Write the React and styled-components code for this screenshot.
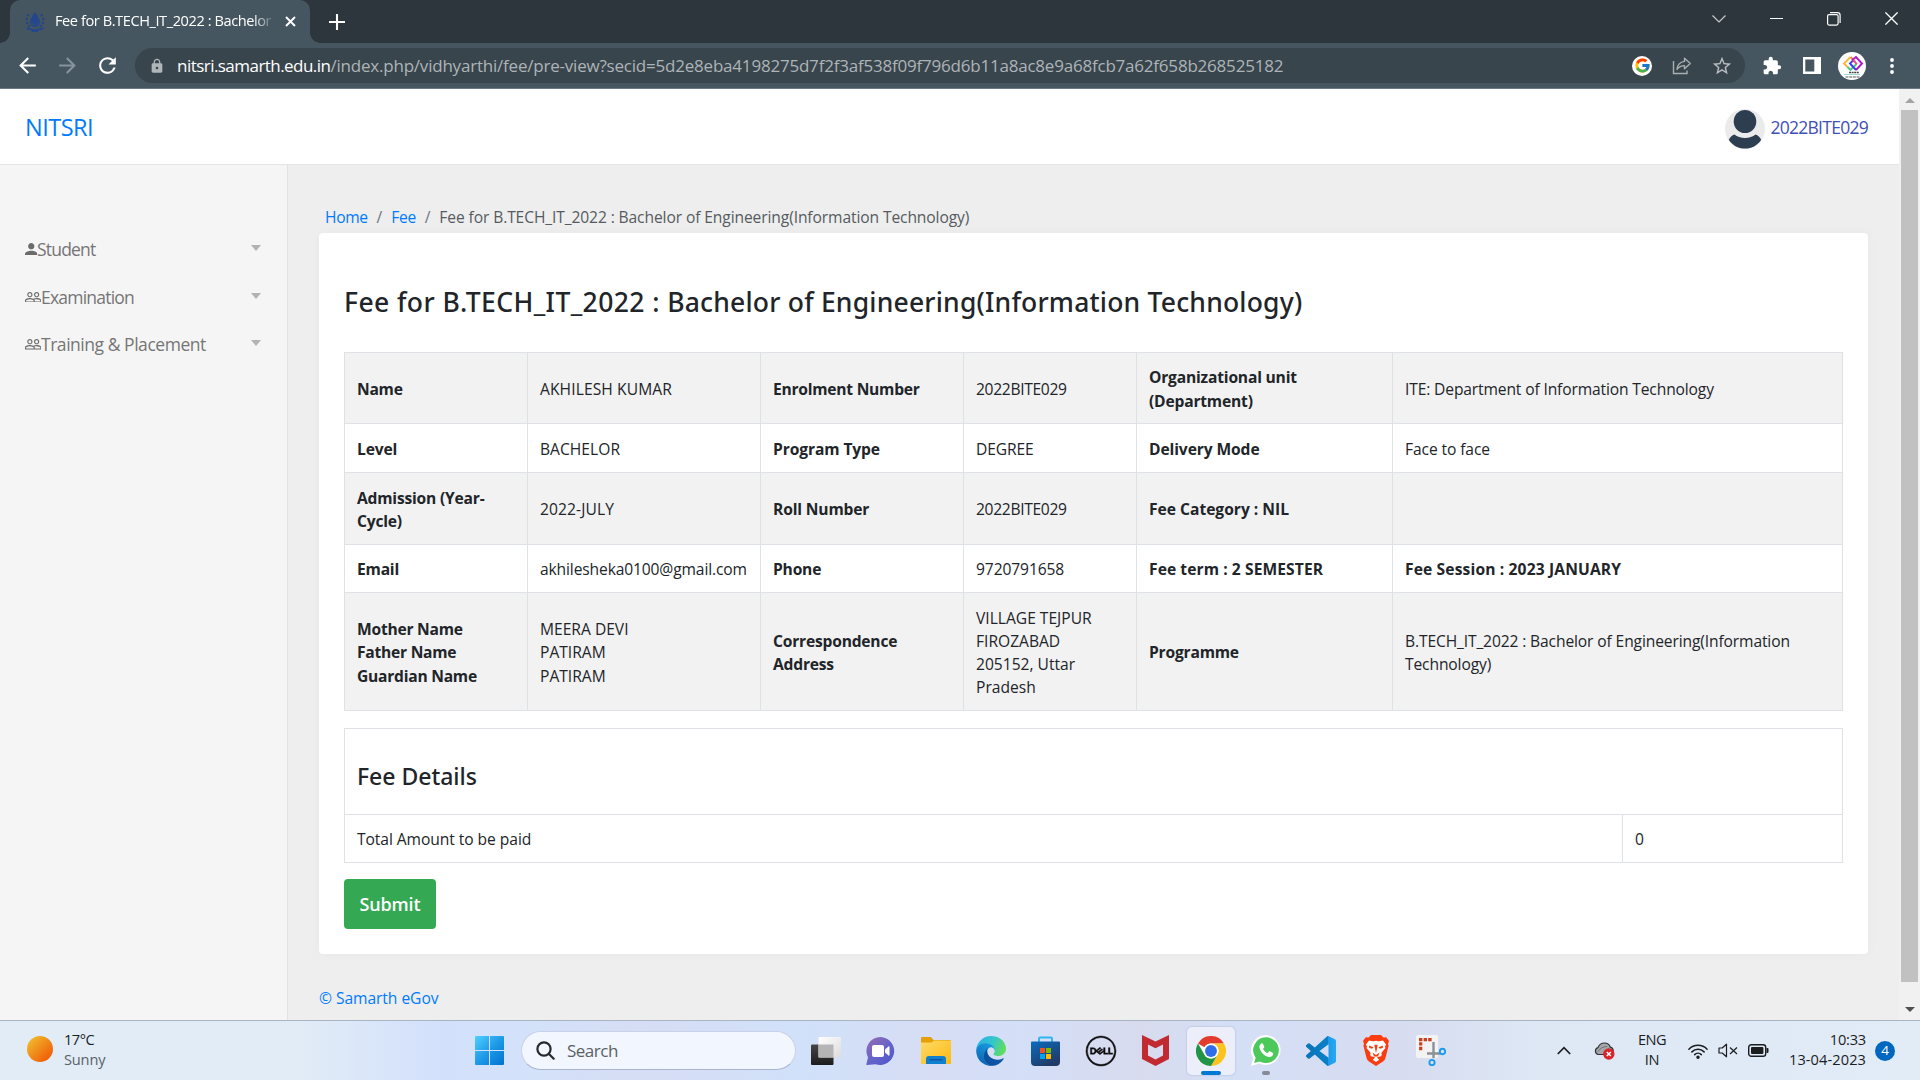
import React from 'react';
import styled, { createGlobalStyle } from 'styled-components';
import { MdArrowBack, MdArrowForward, MdRefresh, MdLock, MdStarBorder, MdExtension } from 'react-icons/md';
import { FcGoogle } from 'react-icons/fc';
import { SiDell } from 'react-icons/si';

const FONT = '"Open Sans", "Noto Sans", "Liberation Sans", sans-serif';

const GlobalStyle = createGlobalStyle`
  *, *::before, *::after { box-sizing: border-box; }
  html, body { margin: 0; padding: 0; overflow: hidden; }
  body { font-family: ${FONT}; color: #212529; }
  svg { display: block; flex: none; }
`;

const Screen = styled.div`
  width: 1920px;
  height: 1080px;
  display: flex;
  flex-direction: column;
  overflow: hidden;
`;

/* text run whose tracking varies with the string */
const Text = styled.span`
  letter-spacing: ${(p) => p.$track || 0}px;
  white-space: nowrap;
`;

/* ---------- browser frame ---------- */

const TitleBar = styled.div`
  height: 43px;
  flex: none;
  display: flex;
  align-items: stretch;
  background: #2c363c;
  padding-left: 10px;
`;

const Tab = styled.div`
  position: relative;
  width: 300px;
  display: flex;
  align-items: center;
  padding: 0 14px 0 15px;
  background: #455660;
  border-radius: 10px 10px 0 0;

  &::before,
  &::after {
    content: '';
    position: absolute;
    bottom: 0;
    width: 10px;
    height: 10px;
  }
  &::before {
    left: -10px;
    background: radial-gradient(circle at 0 0, transparent 9.5px, #455660 10px);
  }
  &::after {
    right: -10px;
    background: radial-gradient(circle at 100% 0, transparent 9.5px, #455660 10px);
  }
`;

const TabTitle = styled.div`
  flex: 1;
  margin: 0 9px 3px 10px;
  overflow: hidden;
  white-space: nowrap;
  font-size: 14.6px;
  line-height: 20px;
  color: #fff;
  letter-spacing: -0.43px;
  mask-image: linear-gradient(90deg, #000 198px, transparent 220px);
`;

const NewTab = styled.div`
  width: 54px;
  display: flex;
  align-items: center;
  justify-content: center;
`;

const WindowControls = styled.div`
  margin-left: auto;
  display: flex;
`;

const WindowButton = styled.div`
  width: 57.4px;
  height: 37px;
  display: flex;
  align-items: center;
  justify-content: center;
`;

const Toolbar = styled.div`
  height: 46px;
  flex: none;
  display: flex;
  align-items: center;
  padding: 0 8px 0 7px;
  background: #455660;
  border-bottom: 1px solid #6b7982;
`;

const ToolButton = styled.div`
  width: 40px;
  height: 35px;
  display: flex;
  align-items: center;
  justify-content: center;
  color: ${(p) => p.$color || '#fff'};
`;

const AddressBar = styled.div`
  flex: 1;
  height: 35px;
  margin: 0 7px 0 8px;
  padding: 0 3px 0 14px;
  display: flex;
  align-items: center;
  border-radius: 18px;
  background: #39454c;
  color: #b0b5b8;
`;

const Address = styled.div`
  flex: 1;
  display: flex;
  margin-left: 12px;
  font-size: 17px;
  line-height: 24px;
  color: #adb4b8;
`;

const Host = styled(Text)`
  color: #fff;
`;

const GoogleBadge = styled.div`
  width: 20px;
  height: 20px;
  border-radius: 50%;
  background: #fff;
  display: flex;
  align-items: center;
  justify-content: center;
`;

/* ---------- page ---------- */

const Viewport = styled.div`
  flex: 1;
  display: flex;
  min-height: 0;
`;

const Page = styled.div`
  flex: 1;
  min-width: 0;
  display: flex;
  flex-direction: column;
`;

const Header = styled.header`
  height: 76px;
  flex: none;
  display: flex;
  align-items: center;
  justify-content: space-between;
  padding: 0 31px 0 25px;
  background: #fff;
  border-bottom: 1px solid #e4e4e4;
`;

const Brand = styled.div`
  font-size: 23.5px;
  line-height: 32px;
  color: #007bff;
`;

const User = styled.div`
  display: flex;
  align-items: center;
  gap: 5px;
  font-size: 17.5px;
  line-height: 24px;
  color: #3f51b5;
  svg { margin-top: 5px; }
`;

const Body = styled.div`
  flex: 1;
  display: flex;
  min-height: 0;
`;

const Sidebar = styled.nav`
  width: 288px;
  flex: none;
  padding-top: 60.4px;
  background: #f5f5f5;
  border-right: 1px solid #e2e2e2;
`;

const NavItem = styled.div`
  height: 47.6px;
  display: flex;
  align-items: center;
  padding: 0 26px 0 24.5px;
  font-size: 17.5px;
  line-height: 24px;
  color: #757575;
`;

const Caret = styled.i`
  margin: 0 0 2px auto;
  border: 5.5px solid transparent;
  border-top: 6px solid #b2b2b2;
  border-bottom: 0;
`;

const Main = styled.main`
  flex: 1;
  min-width: 0;
  padding: 34px 31px 0;
  background: #eeeeee;
`;

const Breadcrumb = styled.div`
  height: 34px;
  display: flex;
  align-items: center;
  padding: 1px 0 0 6px;
  font-size: 15.6px;
  line-height: 22px;
  color: #555b60;
`;

const Crumb = styled(Text)`
  color: #007bff;
`;

const Slash = styled.span`
  width: 23.5px;
  text-align: center;
  color: #6c757d;
`;

const Card = styled.section`
  height: 721px;
  padding: 25px;
  border-radius: 4px;
  background: #fff;
  box-shadow: 0 0 12px rgba(0, 0, 0, 0.03);
`;

const Heading = styled.h1`
  margin: 25px 0 31px;
  font-family: "Noto Sans", ${FONT};
  font-size: 26.5px;
  font-weight: 500;
  line-height: 38px;
  white-space: nowrap;
`;

const Table = styled.table`
  width: 100%;
  table-layout: fixed;
  border-collapse: collapse;
  margin-bottom: ${(p) => p.$gap}px;
  font-size: 15.6px;
  line-height: 23.2px;
`;

const Row = styled.tr`
  height: ${(p) => p.$height}px;
  background: ${(p) => (p.$shaded ? '#f2f2f2' : '#fff')};
`;

const Cell = styled.td`
  padding: 3px 0 0 12px;
  border: 1px solid #dee2e6;
  vertical-align: middle;
  white-space: nowrap;
  font-weight: ${(p) => (p.$bold ? 700 : 400)};
`;

const Line = styled.div`
  letter-spacing: ${(p) => p.$track}px;
`;

const SectionTitle = styled.h2`
  margin: 0;
  padding-top: 5px;
  font-family: "Noto Sans", ${FONT};
  font-size: 23px;
  font-weight: 500;
  line-height: 30px;
  letter-spacing: -0.02px;
`;

const SubmitButton = styled.button`
  display: block;
  width: 92px;
  height: 50px;
  padding: 0 0 1px;
  border: 0;
  border-radius: 4px;
  background: #34a853;
  color: #fff;
  font: 600 18px/24px ${FONT};
  letter-spacing: -0.17px;
`;

const Footer = styled.footer`
  margin-top: 33px;
  font-size: 15.6px;
  line-height: 22px;
  color: #007bff;
`;

const Scrollbar = styled.div`
  width: 21px;
  flex: none;
  display: flex;
  flex-direction: column;
  align-items: center;
  background: #f1f1f1;
  padding: 9px 2px 8px;
`;

const Arrow = styled.i`
  border: 5px solid transparent;
  ${(p) => (p.$up ? 'border-top: 0; border-bottom: 5px solid #a3a3a3;' : 'border-bottom: 0; border-top: 5px solid #505050;')}
`;

const Thumb = styled.div`
  width: 17px;
  height: 872px;
  margin: 7px 0 25px;
  background: #c1c1c1;
`;

/* ---------- taskbar ---------- */

const Taskbar = styled.div`
  height: 60px;
  flex: none;
  display: flex;
  align-items: center;
  border-top: 1px solid #a9b4c3;
  background: linear-gradient(90deg, #e1ecf6 0, #e2ecf7 300px, #dae6f9 370px, #d3e0fb 440px, #d3e2fa 520px, #d6ddf4 640px, #d1e1fa 800px, #d6ddf4 930px, #d4dff8 1020px, #d8dbee 1140px, #d4dff6 1230px, #d7dcf0 1400px, #dee8f5 1540px, #e1ecf7 1920px);
`;

const Weather = styled.div`
  width: 475px;
  display: flex;
  align-items: center;
  padding-left: 27px;
  gap: 11px;
`;

const Sun = styled.div`
  width: 26px;
  height: 26px;
  border-radius: 50%;
  margin-top: -3px;
  background: linear-gradient(135deg, #f0b429 15%, #f0650c 80%);
`;

const Stack = styled.div`
  display: flex;
  flex-direction: column;
  align-items: ${(p) => p.$align || 'flex-start'};
  margin-top: -3px;
  font-size: 14.6px;
  line-height: 20px;
  color: #1b1d1f;
`;

const Muted = styled(Text)`
  color: #5b6168;
`;

const SearchBox = styled.div`
  width: 275px;
  height: 39px;
  margin: 0 2px 0 17px;
  padding: 0 14px;
  display: flex;
  align-items: center;
  gap: 12px;
  border-radius: 20px;
  border: 1px solid #c8d1e8;
  border-bottom-color: #aab4cc;
  background: #f2f6fe;
  font-size: 17px;
  color: #5b6067;
`;

const TaskSlot = styled.div`
  width: 55px;
  height: 59px;
  display: flex;
  align-items: center;
  justify-content: center;
`;

const TaskTile = styled.div`
  position: relative;
  width: 48px;
  height: 48px;
  display: flex;
  align-items: center;
  justify-content: center;
  border-radius: 5px;
  background: ${(p) => (p.$active ? '#eceff9' : 'transparent')};
  box-shadow: ${(p) => (p.$active ? '0 0 1px 1px rgba(150,160,190,.25)' : 'none')};
`;

const RunMark = styled.i`
  position: absolute;
  bottom: 0;
  left: 50%;
  transform: translateX(-50%);
  width: ${(p) => (p.$active ? 20 : 8)}px;
  height: 4px;
  border-radius: 2px;
  background: ${(p) => (p.$active ? '#0078d4' : '#868a94')};
`;

const Tray = styled.div`
  margin-left: auto;
  display: flex;
  align-items: center;
  padding-right: 25px;
`;

const TraySlot = styled.div`
  width: ${(p) => p.$width}px;
  display: flex;
  align-items: center;
  justify-content: ${(p) => (p.$end ? 'flex-end' : 'center')};
`;

const Badge = styled.div`
  width: 20px;
  height: 20px;
  margin-left: 9px;
  border-radius: 50%;
  background: #0067c0;
  color: #fff;
  font-size: 13.5px;
  line-height: 19px;
  text-align: center;
`;

/* ---------- drawings ---------- */

const Favicon = () => (
  <svg width="20" height="20" viewBox="0 0 20 20" fill="#24468c">
    <path d="M10 0C7.6 3.4 6.2 5.4 6.2 7.6a3.8 3.8 0 0 0 7.6 0C13.800 5.400 12.400 3.400 10 0z" />
    <circle cx="10" cy="10" r="5.200" opacity=".8" />
    <circle cx="3.200" cy="3.200" r="1.300" /><circle cx="16.800" cy="3.200" r="1.300" />
    <circle cx="1.700" cy="7" r="1.300" /><circle cx="18.300" cy="7" r="1.300" />
    <circle cx="2" cy="11" r="1.300" /><circle cx="18" cy="11" r="1.300" />
    <circle cx="4" cy="14" r="1.200" /><circle cx="16" cy="14" r="1.200" />
    <path d="M1 15.500c3 .3 6 .8 9 2 3-1.200 6-1.700 9-2-.6 2.500-3 2.500-5 2.600L13 20H7l-1-1.900c-2-.1-4.400-.1-5-2.600z" />
  </svg>
);

const ShareIcon = () => (
  <svg width="20" height="18" viewBox="0 0 20 18" fill="none" stroke="#a9aeb1" strokeWidth="1.400">
    <path d="M1.500 4v12.500h13.500v-3" />
    <path d="M12.500 1.200l5.800 5.300-5.800 5.300V8.600c-3.600 0-5.700 1.200-7.500 3.800.4-4.200 2.800-7.300 7.500-8z" strokeLinejoin="round" />
  </svg>
);

const ProfilePicture = () => (
  <svg width="28" height="28" viewBox="0 0 28 28" fill="none">
    <circle cx="14" cy="14" r="14" fill="#fff" />
    <g strokeWidth="1.900">
      <path d="M12.500 5L6 11.500l3.500 3.500" stroke="#f8b63c" />
      <path d="M12.500 5l5 5" stroke="#f58a4b" />
      <path d="M9.500 15l3 3 6-6" stroke="#4cc87a" />
      <path d="M14 8l4-3 6 6.500-6 6.500" stroke="#b018c8" />
      <path d="M18 18l-6-6.500L15 8.500" stroke="#3b3bf0" />
      <path d="M15 8.500l4 3.500" stroke="#ef4a88" />
    </g>
    <path d="M11 20.500h10" stroke="#444" strokeWidth="1.500" strokeDasharray="2 .6" />
    <path d="M6 22.500h16" stroke="#9adbd8" />
    <path d="M7.500 25h14" stroke="#555" strokeWidth="1.200" strokeDasharray="3 .7" />
  </svg>
);

const UserAvatar = () => (
  <svg width="40" height="40" viewBox="0 0 40 40">
    <circle cx="20" cy="20" r="20" fill="#ebebeb" />
    <ellipse cx="20" cy="12.500" rx="11.300" ry="11.600" fill="#2c3e50" />
    <path d="M9.500 25.500C12 27.500 16 29 20 29s8-1.500 10.500-3.500c2.600.8 4.400 2.700 5.700 5.200C33 36 27 39.500 20 39.500S7 36 3.800 30.700c1.300-2.500 3.100-4.400 5.700-5.200z" fill="#2c3e50" />
  </svg>
);

const PersonIcon = () => (
  <svg width="12.500" height="12.500" viewBox="4 4 16 16" fill="#6b6b6b">
    <path d="M12 12c2.210 0 4-1.790 4-4s-1.790-4-4-4-4 1.790-4 4 1.790 4 4 4zm0 2c-2.670 0-8 1.340-8 4v2h16v-2c0-2.660-5.330-4-8-4z" />
  </svg>
);

const PeopleIcon = () => (
  <svg width="16.500" height="10.500" viewBox="1 5 22 14" fill="#6b6b6b">
    <path d="M16.500 13c-1.200 0-3.070.34-4.500 1-1.430-.67-3.300-1-4.500-1C5.330 13 1 14.080 1 16.250V19h22v-2.750c0-2.170-4.330-3.250-6.500-3.250zm-4 4.500h-10v-1.250c0-.54 2.560-1.750 5-1.750s5 1.210 5 1.750v1.250zm9 0H14v-1.250c0-.46-.2-.86-.52-1.220.88-.3 1.960-.53 3.020-.53 2.440 0 5 1.210 5 1.750v1.250zM7.500 12c1.930 0 3.500-1.570 3.500-3.500S9.430 5 7.500 5 4 6.570 4 8.500 5.570 12 7.500 12zm0-5.500c1.100 0 2 .9 2 2s-.9 2-2 2-2-.9-2-2 .9-2 2-2zm9 5.500c1.930 0 3.500-1.570 3.500-3.500S18.430 5 16.500 5 13 6.570 13 8.500s1.570 3.500 3.500 3.500zm0-5.500c1.100 0 2 .9 2 2s-.9 2-2 2-2-.9-2-2 .9-2 2-2z" />
  </svg>
);

const WindowsLogo = () => (
  <svg width="29" height="29" viewBox="0 0 29 29">
    <defs>
      <linearGradient id="win" gradientUnits="userSpaceOnUse" x1="0" y1="0" x2="29" y2="29">
        <stop offset="0" stopColor="#4fd0ff" /><stop offset=".5" stopColor="#1e9ae8" /><stop offset="1" stopColor="#0072d0" />
      </linearGradient>
    </defs>
    <path d="M1 0h13v14H0V1a1 1 0 0 1 1-1zM15 0h13a1 1 0 0 1 1 1v13H15zM0 15h14v14H1a1 1 0 0 1-1-1zM15 15h14v13a1 1 0 0 1-1 1H15z" fill="url(#win)" />
  </svg>
);

const TaskViewIcon = () => (
  <svg width="30" height="28" viewBox="0 0 30 28">
    <defs>
      <linearGradient id="tvd" x1="0" y1="0" x2="0" y2="1"><stop offset="0" stopColor="#454545" /><stop offset="1" stopColor="#1d1d1d" /></linearGradient>
      <linearGradient id="tvl" x1="0" y1="0" x2="1" y2="1"><stop offset="0" stopColor="#fff" /><stop offset="1" stopColor="#dcdcdc" /></linearGradient>
    </defs>
    <rect y="7.500" width="22.500" height="20.500" rx="1" fill="url(#tvd)" />
    <rect x="7.500" width="22.500" height="20.500" rx="1" fill="url(#tvl)" />
    <rect x="7.500" y="7.500" width="15" height="13" fill="#b5b5b5" />
  </svg>
);

const ChatIcon = () => (
  <svg width="29" height="28" viewBox="0 0 29 28">
    <defs><linearGradient id="chat" x1="0" y1="0" x2=".8" y2="1"><stop offset="0" stopColor="#9a6ab0" /><stop offset=".5" stopColor="#6a66c8" /><stop offset="1" stopColor="#5058cc" /></linearGradient></defs>
    <path d="M14.500 0a14 14 0 1 1-5 27.200L1 28c-.6 0-.8-.4-.6-.9L2 20.500A14 14 0 0 1 14.500 0z" fill="url(#chat)" />
    <rect x="6" y="8" width="12" height="12" rx="2" fill="#fff" />
    <path d="M19 12.500l3.500-3c.5-.4 1-.1 1 .4v8.200c0 .5-.5.8-1 .4l-3.500-3z" fill="#fff" />
  </svg>
);

const FolderIcon = () => (
  <svg width="30" height="27" viewBox="0 0 30 27">
    <defs><linearGradient id="fold" x1="0" y1="0" x2="1" y2="1"><stop offset="0" stopColor="#ffdb66" /><stop offset="1" stopColor="#fdb813" /></linearGradient></defs>
    <path d="M0 1a1 1 0 0 1 1-1h9l2.500 3H29a1 1 0 0 1 1 1v4H0z" fill="#e3a008" />
    <path d="M0 5.500h10.500L13 3.500h17V27H0z" fill="url(#fold)" />
    <path d="M5 27v-5a3 3 0 0 1 3-3h14a3 3 0 0 1 3 3v5z" fill="#0f7fd0" />
    <path d="M8.500 22.800h13" stroke="#0a4f96" strokeWidth="1.200" />
  </svg>
);

const EdgeIcon = () => (
  <svg width="30" height="30" viewBox="0 0 256 256">
    <defs>
      <linearGradient id="e1" x1="0" y1="0" x2="1" y2="0"><stop offset="0" stopColor="#0c4f9b" /><stop offset="1" stopColor="#1159a8" /></linearGradient>
      <linearGradient id="e2" x1=".7" y1="0" x2=".3" y2="1"><stop offset="0" stopColor="#1b9de2" /><stop offset="1" stopColor="#0a63b4" /></linearGradient>
      <linearGradient id="e3" x1="0" y1=".3" x2="1" y2=".6"><stop offset="0" stopColor="#2bb1e6" /><stop offset=".5" stopColor="#34c5ce" /><stop offset="1" stopColor="#62df56" /></linearGradient>
    </defs>
    <path d="M231 190.500c-3.400 1.800-6.900 3.400-10.500 4.700a102 102 0 0 1-35.800 6.500c-47.300 0-88.400-32.500-88.400-74.200.1-11.400 6.400-21.800 16.400-27.200-42.700 1.800-53.700 46.300-53.700 72.400 0 73.700 68 81.200 82.600 81.200 7.900 0 19.800-2.300 27-4.500l1.300-.5a128 128 0 0 0 66.500-52.700 4.200 4.200 0 0 0-5.400-5.700z" fill="url(#e1)" />
    <path d="M105.700 241.400A79 79 0 0 1 83 220a80.700 80.700 0 0 1 29.800-119.700c3.100-1.500 8.400-4.100 15.400-4 10 .1 19.300 4.900 25.300 12.900a32 32 0 0 1 6.300 18.700c0-.2 24.200-78.500-79.100-78.500C37.300 49.400 1.600 90.500 1.600 126.700A128 128 0 0 0 169.400 249.800a75.500 75.500 0 0 1-63.700-8.400z" fill="url(#e2)" />
    <path d="M152.300 148.900c-.9 1-3.400 2.500-3.400 5.600 0 2.600 1.700 5.200 4.700 7.300 14.500 10 41.700 8.700 41.800 8.700 10.700 0 21.200-2.900 30.300-8.400A61.600 61.600 0 0 0 256 109c.3-22.400-8-37.300-11.300-43.900C223.600 23.700 178.500.4 128.300.4A128 128 0 0 0 .3 127.100c.5-36.500 36.800-66 80.200-66 3.500 0 23.500.3 42.100 10.100 16.400 8.600 25 19 30.900 29.300 6.200 10.700 7.300 24.200 7.300 29.600s-2.700 13.300-8.500 18.800z" fill="url(#e3)" />
  </svg>
);

const StoreIcon = () => (
  <svg width="29" height="30" viewBox="0 0 29 30">
    <defs><linearGradient id="store" x1="0" y1="0" x2=".6" y2="1"><stop offset="0" stopColor="#0a6cc0" /><stop offset="1" stopColor="#223a66" /></linearGradient></defs>
    <path d="M8 6V2.800A1.300 1.300 0 0 1 9.300 1.500h10.400A1.300 1.300 0 0 1 21 2.800V6" fill="none" stroke="#2fb6f2" strokeWidth="2" />
    <path d="M1 5.500h27a1 1 0 0 1 1 1V26a4 4 0 0 1-4 4H4a4 4 0 0 1-4-4V6.500a1 1 0 0 1 1-1z" fill="url(#store)" />
    <path d="M9 12h5v5H9z" fill="#f25022" /><path d="M15 12h5v5h-5z" fill="#7fba00" />
    <path d="M9 18h5v5H9z" fill="#00a4ef" /><path d="M15 18h5v5h-5z" fill="#ffb900" />
  </svg>
);

const McAfeeIcon = () => (
  <svg width="27" height="31" viewBox="0 0 27 31">
    <path d="M0 0l13.500 6.500L27 0v24l-13.500 7L0 24zM6 9.500v11l7.500 4 7.500-4v-11l-7.500 3.700z" fill="#c02a30" fillRule="evenodd" />
  </svg>
);

const ChromeIcon = () => (
  <svg width="30" height="30" viewBox="0 0 48 48">
    <circle cx="24" cy="24" r="24" fill="#fff" />
    <path d="M3.200 12A24 24 0 0 1 44.800 12H24a12 12 0 0 0-10.400 6z" fill="#e33b2e" />
    <path d="M44.800 12A24 24 0 0 1 24 48l10.400-18A12 12 0 0 0 24 12z" fill="#fcc31e" />
    <path d="M24 48A24 24 0 0 1 3.200 12l10.400 18A12 12 0 0 0 34.400 30z" fill="#239446" />
    <circle cx="24" cy="24" r="12" fill="#fff" />
    <circle cx="24" cy="24" r="9.500" fill="#2f6ee8" />
  </svg>
);

const WhatsAppIcon = () => (
  <svg width="30" height="31" viewBox="0 0 30 31">
    <path d="M15 0a15 15 0 1 1-6.800 28.600L0 31l2.300-8A15 15 0 0 1 15 0z" fill="#fff" />
    <path d="M15 2.300a12.900 12.900 0 1 1-6.300 24.200l-5.600 1.600 1.600-5.300A12.900 12.900 0 0 1 15 2.300z" fill="#4bc95a" />
    <path d="M10.300 8.500c.5-.5 1.400-.5 1.700.2l1.200 2.800c.2.500 0 .9-.3 1.300l-.9 1.100c1 2 2.500 3.300 4.600 4.200l1.200-1.400c.3-.4.800-.5 1.200-.3l2.700 1.300c.5.300.6.700.5 1.200-.3 1.900-2 3-3.700 3-4.900-.5-9.600-5-10.100-10 0-1.400.8-2.600 1.900-3.400z" fill="#fff" />
  </svg>
);

const VsCodeIcon = () => (
  <svg width="30" height="30" viewBox="0 0 24 24">
    <defs><linearGradient id="vsc" x1="0" y1="0" x2="1" y2="0"><stop offset="0" stopColor="#0a74b8" /><stop offset=".74" stopColor="#0a80c8" /><stop offset=".75" stopColor="#1e9be8" /><stop offset="1" stopColor="#28a8f4" /></linearGradient></defs>
    <path d="M23.150 2.587L18.210.21a1.494 1.494 0 0 0-1.705.29l-9.460 8.630-4.120-3.128a.999.999 0 0 0-1.276.057L.327 7.261A1 1 0 0 0 .326 8.740L3.899 12 .326 15.260a1 1 0 0 0 .001 1.479L1.650 17.940a.999.999 0 0 0 1.276.057l4.120-3.128 9.460 8.630a1.492 1.492 0 0 0 1.704.29l4.942-2.377A1.500 1.500 0 0 0 24 20.060V3.939a1.500 1.500 0 0 0-.85-1.352zm-5.146 14.861L10.826 12l7.178-5.448v10.896z" fill="url(#vsc)" />
  </svg>
);

const BraveIcon = () => (
  <svg width="26" height="31" viewBox="0 0 26 31">
    <path d="M8 0h10l2.500 2.600 2.700-.3L26 6l-1 2.800.6 2-3.300 12.700c-.4 1.300-1.200 2.300-2.300 3L13 31l-7-4.500c-1.100-.7-1.900-1.700-2.300-3L.4 10.800l.6-2L0 6l2.800-3.700 2.700.3z" fill="#fb3b10" />
    <path d="M6 5.500l4 .8 3-.6 3 .6 4-.8 3 4-1 2.200.5 1.400-3.800 4.500c-.6.9-.1 1.300.2 2l-.8 1.700-3.600.8-.2 1 2 1.700-3.300 2.200-3.300-2.200 2-1.700-.2-1-3.600-.8-.8-1.700c.3-.7.8-1.100.2-2L3.500 13.100l.5-1.400-1-2.200z" fill="#fff" />
    <path d="M6 10.500l4.500 1.800-1.500 1.400-2.700-.6zM20 10.500l-4.500 1.800 1.500 1.400 2.700-.6zM11.300 9.800L13 18.500l1.700-8.700zM9.500 17.500l3.500 2.400 3.500-2.400-1.500 4h-4z" fill="#fb3b10" />
  </svg>
);

const SnipIcon = () => (
  <svg width="30" height="31" viewBox="0 0 30 31">
    <rect width="22" height="23" rx="2" fill="#f3f3f3" />
    <path d="M3 4.700h13M4.700 7.200v9" fill="none" stroke="#c8401c" strokeWidth="3.200" strokeDasharray="3.400 1.200" />
    <path d="M17.500 7v16M11 18.500h13" stroke="#8a9096" strokeWidth="2.400" fill="none" />
    <circle cx="26.500" cy="16.500" r="2.700" fill="none" stroke="#1e9be8" strokeWidth="1.900" />
    <circle cx="16" cy="27.500" r="2.600" fill="none" stroke="#1e9be8" strokeWidth="1.900" />
  </svg>
);

const CloudIcon = () => (
  <svg width="21" height="18" viewBox="0 0 21 18">
    <path d="M4 12.500A3.600 3.600 0 0 1 4 5.600C5.200 2.500 7.800 1 10.500 1c2.800 0 5 1.600 5.800 4.200 1.800.5 2.900 1.900 2.900 3.700v3.600z" fill="#a5a7aa" stroke="#303234" strokeWidth="1.200" />
    <path d="M4 9.500c2-3 5-5 9-5" stroke="#6e7073" fill="none" />
    <circle cx="14.800" cy="12" r="5.700" fill="#d9242c" />
    <path d="M12.800 10l4 4M16.800 10l-4 4" stroke="#fff" strokeWidth="1.500" />
  </svg>
);

const WifiIcon = () => (
  <svg width="20" height="16" viewBox="0 0 20 16" fill="none" stroke="#1b1d1f" strokeWidth="1.500" strokeLinecap="round">
    <path d="M.9 6.200a12.700 12.700 0 0 1 18.200 0M3.900 8.900a8.600 8.600 0 0 1 12.200 0M6.700 11.600a4.700 4.700 0 0 1 6.600 0" />
    <circle cx="10" cy="14.200" r="1" fill="#1b1d1f" />
  </svg>
);

const MuteIcon = () => (
  <svg width="20" height="15" viewBox="0 0 20 15" fill="none" stroke="#1b1d1f" strokeWidth="1.200" strokeLinejoin="round">
    <path d="M1 5h3.200L8.500 1.200v12.600L4.200 10H1z" />
    <path d="M12 4.500l7 6.500M19 4.500L12 11" />
  </svg>
);

const BatteryIcon = () => (
  <svg width="21" height="13" viewBox="0 0 21 13">
    <rect x=".7" y=".7" width="17" height="11.600" rx="2.600" fill="none" stroke="#1b1d1f" strokeWidth="1.400" />
    <rect x="3" y="3" width="12.400" height="7" rx="1" fill="#1b1d1f" />
    <path d="M18.500 4h1a1 1 0 0 1 1 1v3a1 1 0 0 1-1 1h-1z" fill="#1b1d1f" />
  </svg>
);

/* ---------- data ---------- */

const R = (track, ...lines) => ({ bold: false, track, lines });
const B = (track, ...lines) => ({ bold: true, track, lines });

const COLUMNS = [183, 233, 203, 173, 256, 450];

const ROWS = [
  { height: 71, cells: [B(-0.24, 'Name'), R(0.1, 'AKHILESH KUMAR'), B(-0.24, 'Enrolment Number'), R(-0.31, '2022BITE029'), B(-0.19, 'Organizational unit', '(Department)'), R(-0.136, 'ITE: Department of Information Technology')] },
  { height: 49, cells: [B(-0.15, 'Level'), R(0.03, 'BACHELOR'), B(-0.1, 'Program Type'), R(-0.1, 'DEGREE'), B(-0.1, 'Delivery Mode'), R(-0.1, 'Face to face')] },
  { height: 72, cells: [B(-0.2, 'Admission (Year-', 'Cycle)'), R(0.1, '2022-JULY'), B(-0.15, 'Roll Number'), R(-0.31, '2022BITE029'), B(0, 'Fee Category : NIL'), R(0)] },
  { height: 48, cells: [B(-0.2, 'Email'), R(-0.13, 'akhilesheka0100@gmail.com'), B(-0.2, 'Phone'), R(-0.1, '9720791658'), B(0.083, 'Fee term : 2 SEMESTER'), B(0.143, 'Fee Session : 2023 JANUARY')] },
  { height: 118, cells: [B(-0.24, 'Mother Name', 'Father Name', 'Guardian Name'), R(0, 'MEERA DEVI', 'PATIRAM', 'PATIRAM'), B(-0.2, 'Correspondence', 'Address'), R(0, 'VILLAGE TEJPUR', 'FIROZABAD', '205152, Uttar', 'Pradesh'), B(-0.2, 'Programme'), R(-0.123, 'B.TECH_IT_2022 : Bachelor of Engineering(Information', 'Technology)')] },
];

const NAV = [
  { label: 'Student', track: -0.8, icon: <PersonIcon /> },
  { label: 'Examination', track: -0.78, icon: <PeopleIcon /> },
  { label: 'Training & Placement', track: -0.46, icon: <PeopleIcon /> },
];

const APPS = [
  { name: 'task-view', icon: <TaskViewIcon /> },
  { name: 'chat', icon: <ChatIcon /> },
  { name: 'files', icon: <FolderIcon /> },
  { name: 'edge', icon: <EdgeIcon /> },
  { name: 'store', icon: <StoreIcon /> },
  { name: 'dell', icon: <SiDell size={30} color="#0d0d0d" stroke="#0d0d0d" strokeWidth={0.35} overflow="visible" /> },
  { name: 'mcafee', icon: <McAfeeIcon /> },
  { name: 'chrome', icon: <ChromeIcon />, running: true, active: true },
  { name: 'whatsapp', icon: <WhatsAppIcon />, running: true },
  { name: 'vscode', icon: <VsCodeIcon /> },
  { name: 'brave', icon: <BraveIcon /> },
  { name: 'snip', icon: <SnipIcon /> },
];

const PROGRAMME_CODE = 'Fee for B.TECH_IT_2022 : ';
const PROGRAMME_NAME = 'Bachelor of Engineering(Information Technology)';

/* ---------- app ---------- */

function BrowserFrame() {
  return (
    <>
      <TitleBar>
        <Tab>
          <Favicon />
          <TabTitle>Fee for B.TECH_IT_2022 : Bachelor</TabTitle>
          <svg width="11" height="11" viewBox="0 0 11 11" stroke="#fff" strokeWidth="1.900"><path d="M1 1l9 9M10 1l-9 9" /></svg>
        </Tab>
        <NewTab>
          <svg width="16" height="16" viewBox="0 0 16 16" stroke="#fff" strokeWidth="2.100"><path d="M8 0v16M0 8h16" /></svg>
        </NewTab>
        <WindowControls>
          <WindowButton><svg width="14" height="8" viewBox="0 0 14 8" fill="none" stroke="#c8ccce" strokeWidth="1.200"><path d="M.5.5L7 7 13.500.5" /></svg></WindowButton>
          <WindowButton><svg width="13" height="1" viewBox="0 0 13 1"><rect width="13" height="1" fill="#fff" /></svg></WindowButton>
          <WindowButton>
            <svg width="14" height="14" viewBox="0 0 14 14" fill="none" stroke="#fff" strokeWidth="1.200">
              <rect x=".6" y="2.600" width="10.500" height="10.500" rx="1.500" />
              <path d="M3 .6h7.500a2.600 2.600 0 0 1 2.600 2.600V11" />
            </svg>
          </WindowButton>
          <WindowButton><svg width="13" height="13" viewBox="0 0 13 13" stroke="#fff" strokeWidth="1.300"><path d="M.4.4l12.200 12.200M12.600.4L.4 12.600" /></svg></WindowButton>
        </WindowControls>
      </TitleBar>
      <Toolbar>
        <ToolButton><MdArrowBack size={25} /></ToolButton>
        <ToolButton $color="#87939a"><MdArrowForward size={25} /></ToolButton>
        <ToolButton><MdRefresh size={25} /></ToolButton>
        <AddressBar>
          <MdLock size={16} />
          <Address>
            <Host $track={-0.54}>nitsri.samarth.edu.in</Host>
            <Text $track={-0.21}>/index.php/vidhyarthi/fee/pre-view?secid=5d2e8eba4198275d7f2f3af538f09f796d6b11a8ac8e9a68fcb7a62f658b268525182</Text>
          </Address>
          <ToolButton><GoogleBadge><FcGoogle size={17} /></GoogleBadge></ToolButton>
          <ToolButton><ShareIcon /></ToolButton>
          <ToolButton $color="#b8bcbf"><MdStarBorder size={22} /></ToolButton>
        </AddressBar>
        <ToolButton><MdExtension size={20} /></ToolButton>
        <ToolButton>
          <svg width="18" height="17" viewBox="0 0 18 17"><path d="M0 0h18v17H0zM2.300 2.500v12h9v-12z" fill="#fff" fillRule="evenodd" /></svg>
        </ToolButton>
        <ToolButton><ProfilePicture /></ToolButton>
        <ToolButton>
          <svg width="4" height="16" viewBox="0 0 4 16" fill="#fff"><circle cx="2" cy="2" r="1.900" /><circle cx="2" cy="8" r="1.900" /><circle cx="2" cy="14" r="1.900" /></svg>
        </ToolButton>
      </Toolbar>
    </>
  );
}

function StudentTable() {
  return (
    <Table $gap={17}>
      <colgroup>{COLUMNS.map((w, i) => <col key={i} width={w} />)}</colgroup>
      <tbody>
        {ROWS.map((row, r) => (
          <Row key={r} $height={row.height} $shaded={r % 2 === 0}>
            {row.cells.map((cell, c) => (
              <Cell key={c} $bold={cell.bold}>
                {cell.lines.map((line, l) => <Line key={l} $track={cell.track}>{line}</Line>)}
              </Cell>
            ))}
          </Row>
        ))}
      </tbody>
    </Table>
  );
}

function FeeTable() {
  return (
    <Table $gap={16}>
      <colgroup><col width={1278} /><col width={220} /></colgroup>
      <tbody>
        <Row $height={86}><Cell colSpan={2}><SectionTitle>Fee Details</SectionTitle></Cell></Row>
        <Row $height={48}>
          <Cell><Line $track={-0.06}>Total Amount to be paid</Line></Cell>
          <Cell><Line $track={0}>0</Line></Cell>
        </Row>
      </tbody>
    </Table>
  );
}

function SystemTaskbar() {
  return (
    <Taskbar>
      <Weather>
        <Sun />
        <Stack>
          <Text $track={-0.5}>17°C</Text>
          <Muted $track={-0.17}>Sunny</Muted>
        </Stack>
      </Weather>
      <WindowsLogo />
      <SearchBox>
        <svg width="19" height="19" viewBox="0 0 19 19" fill="none" stroke="#26282b" strokeWidth="2.200" strokeLinecap="round"><circle cx="8" cy="8" r="6.600" /><path d="M13 13l4.700 4.700" /></svg>
        <Text $track={-0.5}>Search</Text>
      </SearchBox>
      {APPS.map((app) => (
        <TaskSlot key={app.name}>
          <TaskTile $active={app.active}>
            {app.icon}
            {app.running && <RunMark $active={app.active} />}
          </TaskTile>
        </TaskSlot>
      ))}
      <Tray>
        <TraySlot $width={40}><svg width="14" height="9" viewBox="0 0 14 9" fill="none" stroke="#1b1d1f" strokeWidth="1.700"><path d="M.8 8L7 1.600 13.200 8" /></svg></TraySlot>
        <TraySlot $width={40}><CloudIcon /></TraySlot>
        <TraySlot $width={56}>
          <Stack $align="center"><Text $track={-0.6}>ENG</Text><Text $track={-0.2}>IN</Text></Stack>
        </TraySlot>
        <TraySlot $width={35}><WifiIcon /></TraySlot>
        <TraySlot $width={26}><MuteIcon /></TraySlot>
        <TraySlot $width={34}><BatteryIcon /></TraySlot>
        <TraySlot $width={91} $end>
          <Stack $align="flex-end"><Text $track={-0.2}>10:33</Text><Text $track={0.09}>13-04-2023</Text></Stack>
        </TraySlot>
        <Badge>4</Badge>
      </Tray>
    </Taskbar>
  );
}

export default function App() {
  return (
    <Screen>
      <GlobalStyle />
      <BrowserFrame />
      <Viewport>
        <Page>
          <Header>
            <Brand><Text $track={-0.5}>NITSRI</Text></Brand>
            <User><UserAvatar /><Text $track={-0.73}>2022BITE029</Text></User>
          </Header>
          <Body>
            <Sidebar>
              {NAV.map((item) => (
                <NavItem key={item.label}>{item.icon}<Text $track={item.track}>{item.label}</Text><Caret /></NavItem>
              ))}
            </Sidebar>
            <Main>
              <Breadcrumb>
                <Crumb $track={-0.35}>Home</Crumb><Slash>/</Slash>
                <Crumb $track={-0.3}>Fee</Crumb><Slash>/</Slash>
                <Text $track={-0.105}>{PROGRAMME_CODE}{PROGRAMME_NAME}</Text>
              </Breadcrumb>
              <Card>
                <Heading><Text $track={0.42}>{PROGRAMME_CODE}</Text><Text $track={0.2}>{PROGRAMME_NAME}</Text></Heading>
                <StudentTable />
                <FeeTable />
                <SubmitButton>Submit</SubmitButton>
              </Card>
              <Footer><Text $track={-0.05}>© Samarth eGov</Text></Footer>
            </Main>
          </Body>
        </Page>
        <Scrollbar><Arrow $up /><Thumb /><Arrow /></Scrollbar>
      </Viewport>
      <SystemTaskbar />
    </Screen>
  );
}
